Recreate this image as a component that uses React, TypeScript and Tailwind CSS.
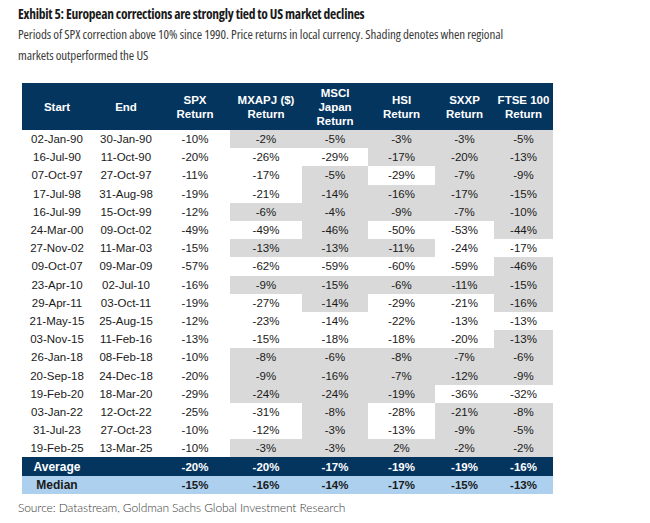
import React from 'react';

type Cell = [string, boolean];

interface Row {
  start: string;
  end: string;
  spx: string;
  cells: Cell[];
}

const rows: Row[] = [
  { start: '02-Jan-90', end: '30-Jan-90', spx: '-10%', cells: [['-2%', true], ['-5%', true], ['-3%', true], ['-3%', true], ['-5%', true]] },
  { start: '16-Jul-90', end: '11-Oct-90', spx: '-20%', cells: [['-26%', false], ['-29%', false], ['-17%', true], ['-20%', true], ['-13%', true]] },
  { start: '07-Oct-97', end: '27-Oct-97', spx: '-11%', cells: [['-17%', false], ['-5%', true], ['-29%', false], ['-7%', true], ['-9%', true]] },
  { start: '17-Jul-98', end: '31-Aug-98', spx: '-19%', cells: [['-21%', false], ['-14%', true], ['-16%', true], ['-17%', true], ['-15%', true]] },
  { start: '16-Jul-99', end: '15-Oct-99', spx: '-12%', cells: [['-6%', true], ['-4%', true], ['-9%', true], ['-7%', true], ['-10%', true]] },
  { start: '24-Mar-00', end: '09-Oct-02', spx: '-49%', cells: [['-49%', false], ['-46%', true], ['-50%', false], ['-53%', false], ['-44%', true]] },
  { start: '27-Nov-02', end: '11-Mar-03', spx: '-15%', cells: [['-13%', true], ['-13%', true], ['-11%', true], ['-24%', false], ['-17%', false]] },
  { start: '09-Oct-07', end: '09-Mar-09', spx: '-57%', cells: [['-62%', false], ['-59%', false], ['-60%', false], ['-59%', false], ['-46%', true]] },
  { start: '23-Apr-10', end: '02-Jul-10', spx: '-16%', cells: [['-9%', true], ['-15%', true], ['-6%', true], ['-11%', true], ['-15%', true]] },
  { start: '29-Apr-11', end: '03-Oct-11', spx: '-19%', cells: [['-27%', false], ['-14%', true], ['-29%', false], ['-21%', false], ['-16%', true]] },
  { start: '21-May-15', end: '25-Aug-15', spx: '-12%', cells: [['-23%', false], ['-14%', false], ['-22%', false], ['-13%', false], ['-13%', false]] },
  { start: '03-Nov-15', end: '11-Feb-16', spx: '-13%', cells: [['-15%', false], ['-18%', false], ['-18%', false], ['-20%', false], ['-13%', true]] },
  { start: '26-Jan-18', end: '08-Feb-18', spx: '-10%', cells: [['-8%', true], ['-6%', true], ['-8%', true], ['-7%', true], ['-6%', true]] },
  { start: '20-Sep-18', end: '24-Dec-18', spx: '-20%', cells: [['-9%', true], ['-16%', true], ['-7%', true], ['-12%', true], ['-9%', true]] },
  { start: '19-Feb-20', end: '18-Mar-20', spx: '-29%', cells: [['-24%', true], ['-24%', true], ['-19%', true], ['-36%', false], ['-32%', false]] },
  { start: '03-Jan-22', end: '12-Oct-22', spx: '-25%', cells: [['-31%', false], ['-8%', true], ['-28%', false], ['-21%', true], ['-8%', true]] },
  { start: '31-Jul-23', end: '27-Oct-23', spx: '-10%', cells: [['-12%', false], ['-3%', true], ['-13%', false], ['-9%', true], ['-5%', true]] },
  { start: '19-Feb-25', end: '13-Mar-25', spx: '-10%', cells: [['-3%', true], ['-3%', true], ['2%', true], ['-2%', true], ['-2%', true]] },
];

const headers: string[][] = [
  ['Start'],
  ['End'],
  ['SPX', 'Return'],
  ['MXAPJ ($)', 'Return'],
  ['MSCI', 'Japan', 'Return'],
  ['HSI', 'Return'],
  ['SXXP', 'Return'],
  ['FTSE 100', 'Return'],
];

const widths = ['w-[70px]', 'w-[68px]', 'w-[70px]', 'w-[72px]', 'w-[66px]', 'w-[67px]', 'w-[59px]', 'w-[59px]'];

const average = ['-20%', '-20%', '-17%', '-19%', '-19%', '-16%'];
const median = ['-15%', '-16%', '-14%', '-17%', '-15%', '-13%'];

export default function App() {
  return (
    <div className="w-[650px] h-[523px] bg-white pl-[18px] pt-[4px]">
      <h1 className="font-['Open_Sans',sans-serif] font-stretch-[75%] font-bold text-[13.5px] tracking-[-0.25px] leading-[20px] text-[#1a1a1a]">
        Exhibit 5: European corrections are strongly tied to US market declines
      </h1>
      <p className="font-['Open_Sans',sans-serif] font-stretch-[75%] text-[13px] tracking-[-0.1px] leading-[21px] text-[#3a3a3a] w-[495px]">
        Periods of SPX correction above 10% since 1990. Price returns in local currency. Shading denotes when regional markets outperformed the US
      </p>

      <table className="mt-[17px] ml-[4px] table-fixed border-collapse font-['Liberation_Sans',Arial,sans-serif] text-[11.5px] text-[#1a1a1a]">
        <colgroup>
          {widths.map((w, i) => (
            <col key={i} className={w} />
          ))}
        </colgroup>
        <thead>
          <tr className="h-[47px] bg-[#04355f] text-white font-bold">
            {headers.map((lines, i) => (
              <th key={i} className="p-0 text-center align-middle leading-[14px]">
                {lines.map((l) => (
                  <div key={l}>{l}</div>
                ))}
              </th>
            ))}
          </tr>
        </thead>
        <tbody>
          {rows.map((r) => (
            <tr key={r.start} className="h-[18.2px] leading-[18px]">
              <td className="p-0 text-center">{r.start}</td>
              <td className="p-0 text-center">{r.end}</td>
              <td className="p-0 text-center">{r.spx}</td>
              {r.cells.map(([v, shaded], i) => (
                <td key={i} className={`p-0 text-center ${shaded ? 'bg-[#d9d9d9]' : 'bg-white'}`}>
                  {v}
                </td>
              ))}
            </tr>
          ))}
          <tr className="h-[18.3px] bg-[#04355f] text-white font-bold leading-[18px]">
            <td className="p-0 text-center text-[12px]">Average</td>
            <td className="p-0"></td>
            {average.map((v, i) => (
              <td key={i} className="p-0 text-center">{v}</td>
            ))}
          </tr>
          <tr className="h-[18.3px] bg-[#acd0ee] text-[#1a1a1a] font-bold leading-[18px]">
            <td className="p-0 text-center text-[12px]">Median</td>
            <td className="p-0"></td>
            {median.map((v, i) => (
              <td key={i} className="p-0 text-center">{v}</td>
            ))}
          </tr>
        </tbody>
      </table>

      <p className="mt-[5px] font-['Lato',sans-serif] font-light text-[12px] tracking-[-0.1px] leading-[18px] text-[#3a3a3a]">
        Source: Datastream, Goldman Sachs Global Investment Research
      </p>
    </div>
  );
}
